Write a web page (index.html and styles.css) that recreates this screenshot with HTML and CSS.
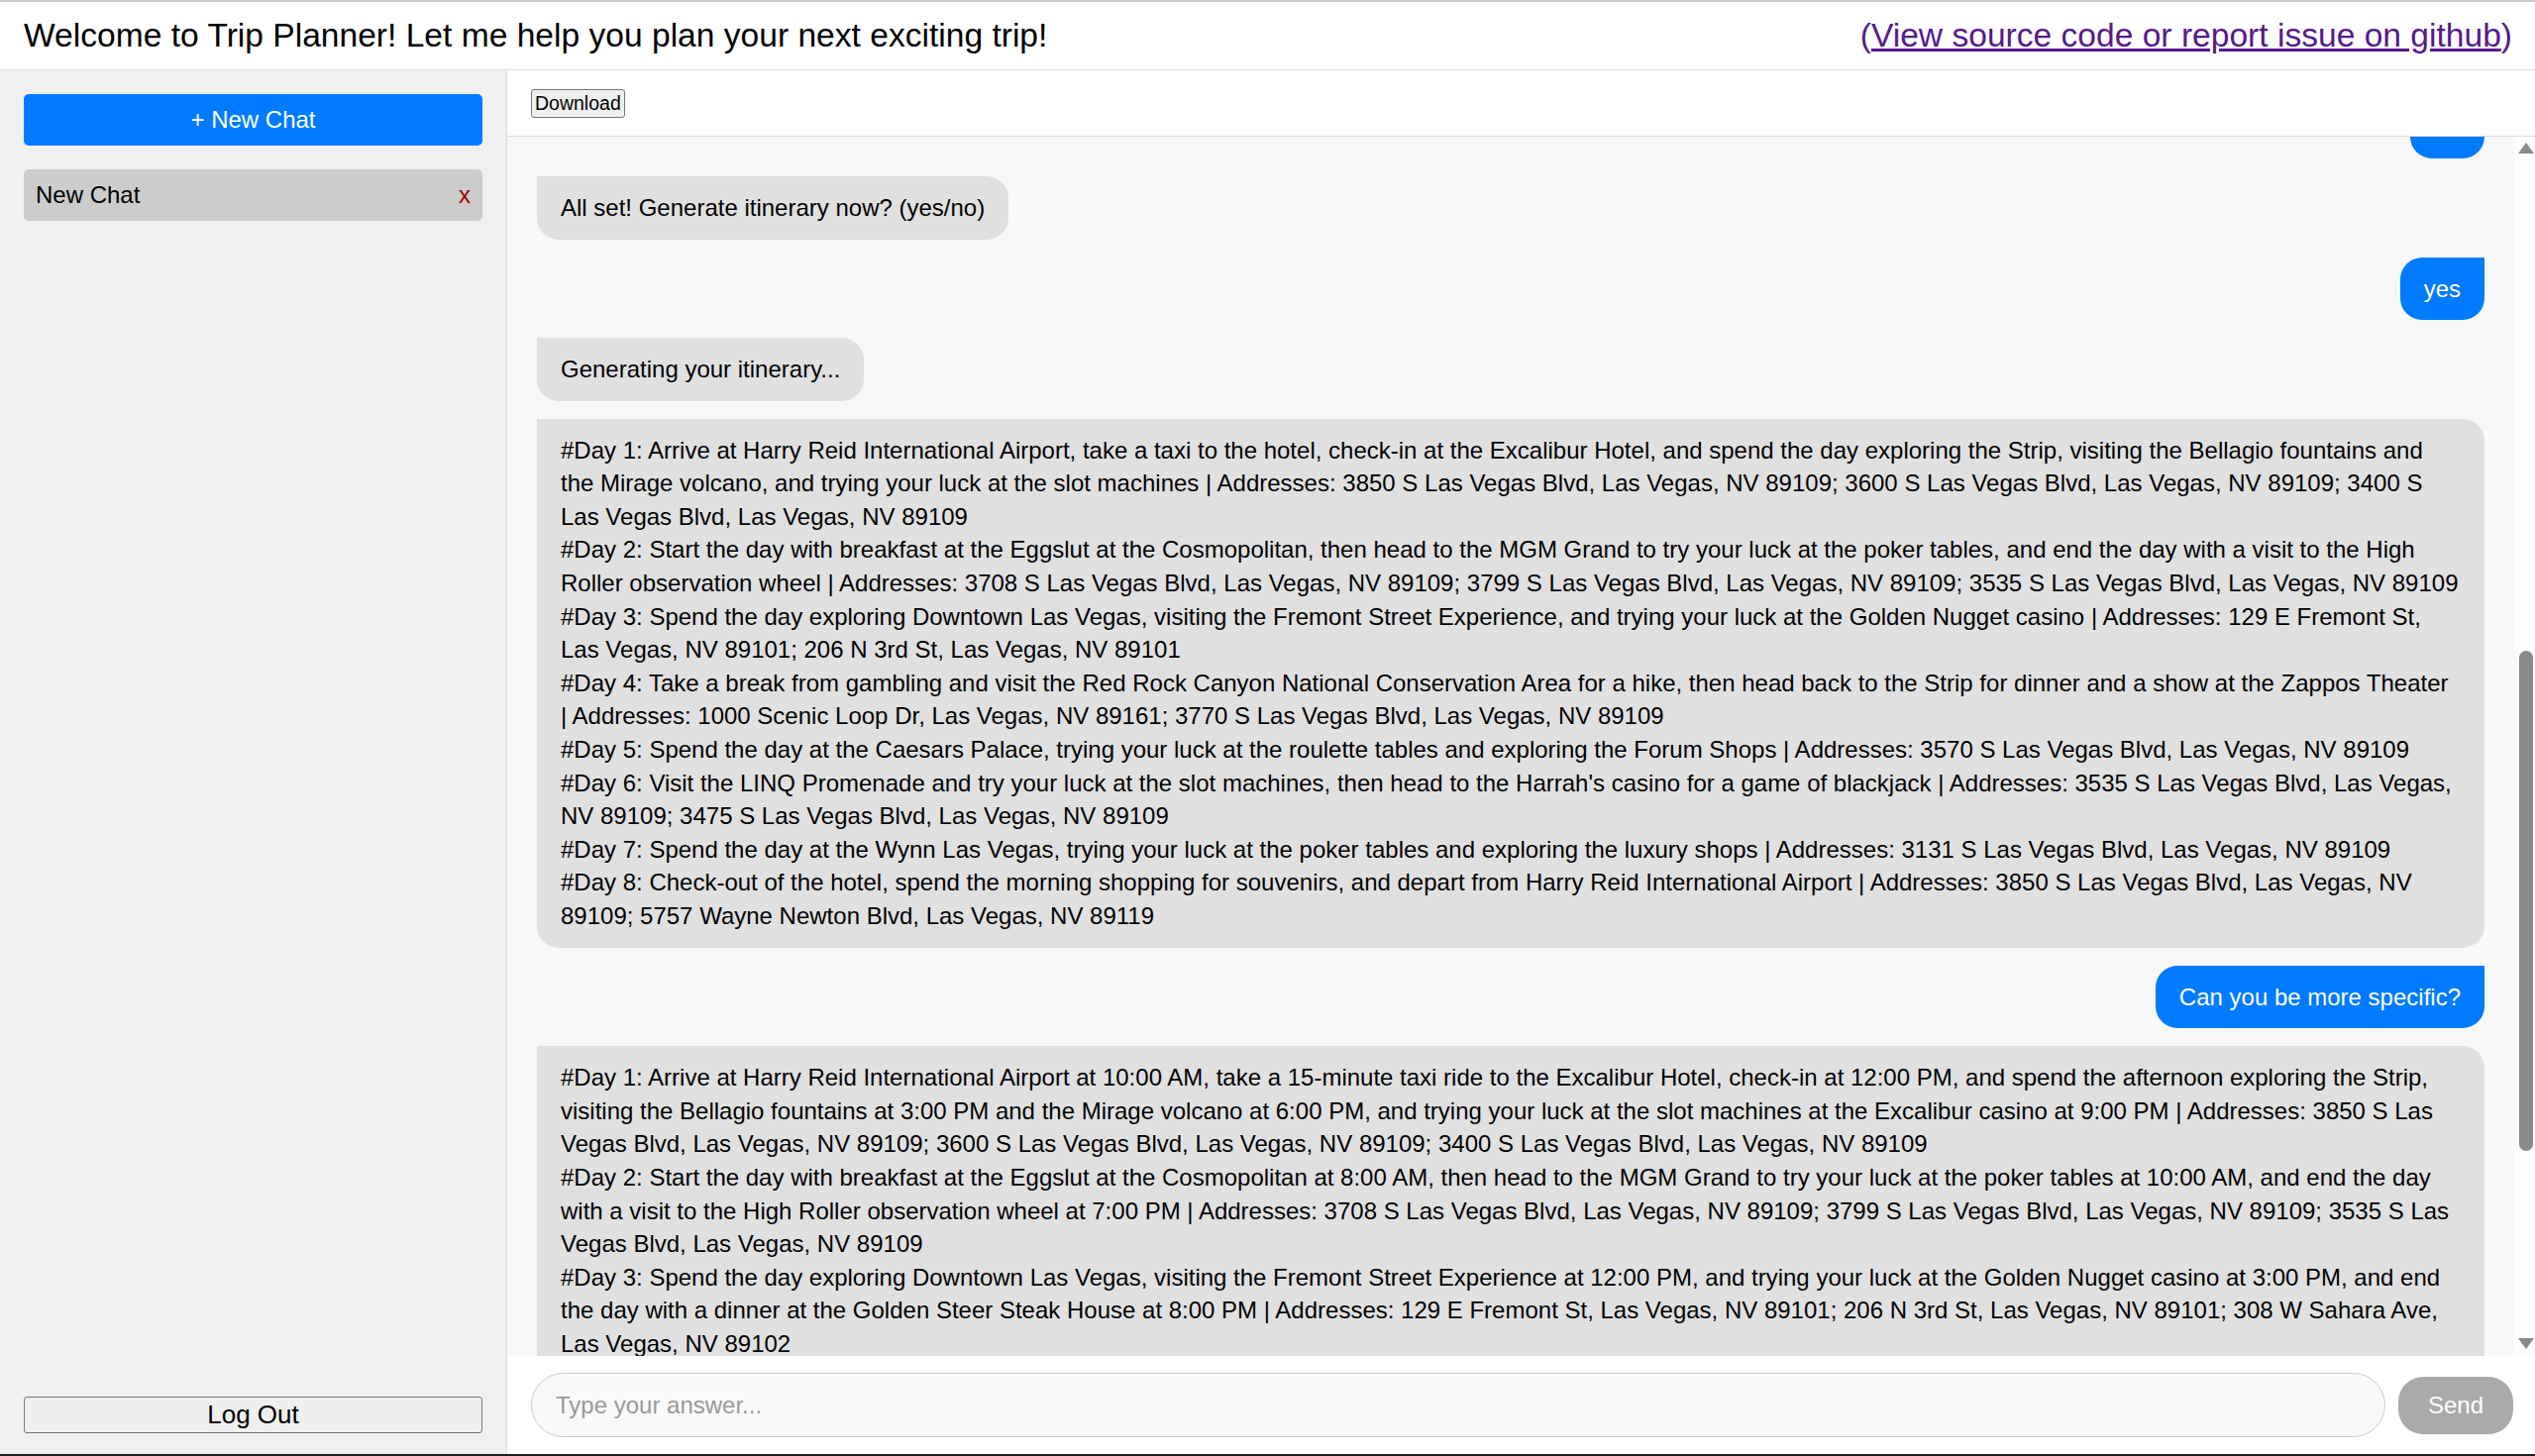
FILE: index.html
```html
<!DOCTYPE html>
<html lang="en">
<head>
<meta charset="utf-8">
<title>Trip Planner</title>
<link rel="stylesheet" href="styles.css">
</head>
<body>
<div class="app">
  <header class="topbar">
    <h1 class="title">Welcome to Trip Planner! Let me help you plan your next exciting trip!</h1>
    <span class="source">(<a href="#">View source code or report issue on github</a>)</span>
  </header>
  <div class="layout">
    <aside class="sidebar">
      <button class="new-chat">+ New Chat</button>
      <div class="chat-item"><span>New Chat</span><span class="del">x</span></div>
      <button class="logout">Log Out</button>
    </aside>
    <main class="main">
      <div class="toolbar"><button class="download">Download</button></div>
      <div class="chat-pane">
        <div class="messages" id="messages">
          <div class="msg user">Hello</div>
          <div class="msg bot">Hi! Where would you like to travel to?</div>
          <div class="msg user">Las Vegas</div>
          <div class="msg bot">Great choice! When does your trip start? (YYYY-MM-DD)</div>
          <div class="msg user">2023-06-01</div>
          <div class="msg bot">How many days will you be staying?</div>
          <div class="msg user">8</div>
          <div class="msg bot">What is your budget for the trip?</div>
          <div class="msg user">$3000</div>
          <div class="msg bot">What kind of activities do you enjoy?</div>
          <div class="msg user">gambling, shows and food</div>
          <div class="msg bot">Who are you traveling with?</div>
          <div class="msg user">friends</div>
          <div class="msg bot">Do you need a rental car? (yes/no)</div>
          <div class="msg user">no</div>
          <div class="msg bot" id="anchor">All set! Generate itinerary now? (yes/no)</div>
          <div class="msg user">yes</div>
          <div class="msg bot">Generating your itinerary...</div>
          <div class="msg bot">#Day 1: Arrive at Harry Reid International Airport, take a taxi to the hotel, check-in at the Excalibur Hotel, and spend the day exploring the Strip, visiting the Bellagio fountains and the Mirage volcano, and trying your luck at the slot machines | Addresses: 3850 S Las Vegas Blvd, Las Vegas, NV 89109; 3600 S Las Vegas Blvd, Las Vegas, NV 89109; 3400 S Las Vegas Blvd, Las Vegas, NV 89109<br>#Day 2: Start the day with breakfast at the Eggslut at the Cosmopolitan, then head to the MGM Grand to try your luck at the poker tables, and end the day with a visit to the High Roller observation wheel | Addresses: 3708 S Las Vegas Blvd, Las Vegas, NV 89109; 3799 S Las Vegas Blvd, Las Vegas, NV 89109; 3535 S Las Vegas Blvd, Las Vegas, NV 89109<br>#Day 3: Spend the day exploring Downtown Las Vegas, visiting the Fremont Street Experience, and trying your luck at the Golden Nugget casino | Addresses: 129 E Fremont St, Las Vegas, NV 89101; 206 N 3rd St, Las Vegas, NV 89101<br>#Day 4: Take a break from gambling and visit the Red Rock Canyon National Conservation Area for a hike, then head back to the Strip for dinner and a show at the Zappos Theater | Addresses: 1000 Scenic Loop Dr, Las Vegas, NV 89161; 3770 S Las Vegas Blvd, Las Vegas, NV 89109<br>#Day 5: Spend the day at the Caesars Palace, trying your luck at the roulette tables and exploring the Forum Shops | Addresses: 3570 S Las Vegas Blvd, Las Vegas, NV 89109<br>#Day 6: Visit the LINQ Promenade and try your luck at the slot machines, then head to the Harrah's casino for a game of blackjack | Addresses: 3535 S Las Vegas Blvd, Las Vegas, NV 89109; 3475 S Las Vegas Blvd, Las Vegas, NV 89109<br>#Day 7: Spend the day at the Wynn Las Vegas, trying your luck at the poker tables and exploring the luxury shops | Addresses: 3131 S Las Vegas Blvd, Las Vegas, NV 89109<br>#Day 8: Check-out of the hotel, spend the morning shopping for souvenirs, and depart from Harry Reid International Airport | Addresses: 3850 S Las Vegas Blvd, Las Vegas, NV 89109; 5757 Wayne Newton Blvd, Las Vegas, NV 89119</div>
          <div class="msg user">Can you be more specific?</div>
          <div class="msg bot">#Day 1: Arrive at Harry Reid International Airport at 10:00 AM, take a 15-minute taxi ride to the Excalibur Hotel, check-in at 12:00 PM, and spend the afternoon exploring the Strip, visiting the Bellagio fountains at 3:00 PM and the Mirage volcano at 6:00 PM, and trying your luck at the slot machines at the Excalibur casino at 9:00 PM | Addresses: 3850 S Las Vegas Blvd, Las Vegas, NV 89109; 3600 S Las Vegas Blvd, Las Vegas, NV 89109; 3400 S Las Vegas Blvd, Las Vegas, NV 89109<br>#Day 2: Start the day with breakfast at the Eggslut at the Cosmopolitan at 8:00 AM, then head to the MGM Grand to try your luck at the poker tables at 10:00 AM, and end the day with a visit to the High Roller observation wheel at 7:00 PM | Addresses: 3708 S Las Vegas Blvd, Las Vegas, NV 89109; 3799 S Las Vegas Blvd, Las Vegas, NV 89109; 3535 S Las Vegas Blvd, Las Vegas, NV 89109<br>#Day 3: Spend the day exploring Downtown Las Vegas, visiting the Fremont Street Experience at 12:00 PM, and trying your luck at the Golden Nugget casino at 3:00 PM, and end the day with a dinner at the Golden Steer Steak House at 8:00 PM | Addresses: 129 E Fremont St, Las Vegas, NV 89101; 206 N 3rd St, Las Vegas, NV 89101; 308 W Sahara Ave, Las Vegas, NV 89102<br>#Day 4: Leave at 8:00 AM for the Red Rock Canyon National Conservation Area for a morning hike, return to the Strip at 1:00 PM for lunch, and end the day with dinner at 6:00 PM and a show at the Zappos Theater at 8:00 PM | Addresses: 1000 Scenic Loop Dr, Las Vegas, NV 89161; 3770 S Las Vegas Blvd, Las Vegas, NV 89109<br>#Day 5: Spend the day at the Caesars Palace, trying your luck at the roulette tables at 11:00 AM, exploring the Forum Shops at 3:00 PM, and ending the night with dinner at Hell's Kitchen at 7:00 PM and a walk along the Strip to see the lights at 10:00 PM | Addresses: 3570 S Las Vegas Blvd, Las Vegas, NV 89109<br>#Day 6: Visit the LINQ Promenade at 11:00 AM and try your luck at the slot machines, then head to the Harrah's casino at 7:00 PM for a game of blackjack | Addresses: 3535 S Las Vegas Blvd, Las Vegas, NV 89109; 3475 S Las Vegas Blvd, Las Vegas, NV 89109<br>#Day 7: Spend the day at the Wynn Las Vegas, trying your luck at the poker tables at 2:00 PM, exploring the luxury shops at 5:00 PM, and watching the Lake of Dreams show at 9:00 PM before a late dessert at the Wynn buffet | Addresses: 3131 S Las Vegas Blvd, Las Vegas, NV 89109<br>#Day 8: Check-out of the hotel at 10:00 AM, spend the morning shopping for souvenirs, and depart from Harry Reid International Airport at 4:00 PM | Addresses: 3850 S Las Vegas Blvd, Las Vegas, NV 89109; 5757 Wayne Newton Blvd, Las Vegas, NV 89119<br>Estimated total budget: $2,950<br>Have a great trip!</div>
        </div>
        <div class="scrollbar" aria-hidden="true">
          <div class="sb-btn"><span class="arrow-up"></span></div>
          <div class="sb-track" id="track"><div class="sb-thumb" id="thumb"></div></div>
          <div class="sb-btn"><span class="arrow-down"></span></div>
        </div>
      </div>
      <form class="composer" onsubmit="return false">
        <input class="answer" type="text" placeholder="Type your answer...">
        <button class="send" type="submit" disabled>Send</button>
      </form>
    </main>
  </div>
</div>
<script src="script.js"></script>
</body>
</html>
```
FILE: styles.css
```css
html, body {
  margin: 0;
  padding: 0;
  height: 100%;
  background: #fff;
}
body {
  font-family: "Liberation Sans", Arial, sans-serif;
  color: #000;
}
button, input {
  font-family: "Liberation Sans", Arial, sans-serif;
}
.app {
  height: 1470px;
  box-sizing: border-box;
  border-top: 2px solid #cccccc;
  border-bottom: 2px solid #222222;
  display: flex;
  flex-direction: column;
  overflow: hidden;
}
.topbar {
  height: 69px;
  flex: none;
  box-sizing: border-box;
  border-bottom: 1px solid #dddddd;
  display: flex;
  align-items: center;
  justify-content: space-between;
  padding: 0 23px 0 24px;
  background: #fff;
}
.title {
  margin: 0;
  font-size: 33.6px;
  font-weight: normal;
  line-height: 1.15;
  white-space: nowrap;
}
.source {
  font-size: 33.6px;
  color: #551a8b;
  line-height: 1.15;
  white-space: nowrap;
}
.source a {
  color: #551a8b;
  text-decoration: underline;
}
.layout {
  flex: 1;
  display: flex;
  min-height: 0;
}
.sidebar {
  width: 512px;
  flex: none;
  box-sizing: border-box;
  background: #f0f0f0;
  border-right: 1px solid #dddddd;
  padding: 24px 24px 21px;
  display: flex;
  flex-direction: column;
  gap: 24px;
}
.new-chat {
  height: 52px;
  border: none;
  border-radius: 5px;
  background: #007bff;
  color: #fff;
  font-size: 24px;
  padding: 0;
}
.chat-item {
  height: 52px;
  box-sizing: border-box;
  border-radius: 5px;
  background: #cccccc;
  display: flex;
  align-items: center;
  justify-content: space-between;
  padding: 0 12px;
  font-size: 24px;
}
.del {
  color: #a00000;
}
.logout {
  margin-top: auto;
  height: 37px;
  font-size: 26px;
  background: #efefef;
  border: 1px solid #767676;
  border-radius: 3px;
  color: #000;
  padding: 0;
}
.main {
  flex: 1;
  min-width: 0;
  display: flex;
  flex-direction: column;
}
.toolbar {
  height: 67px;
  flex: none;
  box-sizing: border-box;
  border-bottom: 1px solid #dddddd;
  display: flex;
  align-items: center;
  padding: 0 24px;
  background: #fff;
}
.download {
  height: 29px;
  font-size: 19.5px;
  padding: 0 3px;
  border: 1px solid #767676;
  border-radius: 3px;
  background: #efefef;
  color: #000;
}
.chat-pane {
  flex: 1;
  min-height: 0;
  display: flex;
  background: #f8f8f8;
}
.messages {
  flex: 1;
  min-width: 0;
  position: relative;
  overflow-y: auto;
  scrollbar-width: none;
  padding: 30px;
  display: flex;
  flex-direction: column;
  gap: 18px;
}
.messages::-webkit-scrollbar {
  display: none;
}
.scrollbar {
  width: 21px;
  flex: none;
  background: #fcfcfc;
  display: flex;
  flex-direction: column;
}
.sb-btn {
  height: 21px;
  flex: none;
  display: flex;
  justify-content: center;
  align-items: center;
  padding-left: 2px;
}
.arrow-up {
  width: 0;
  height: 0;
  border-left: 8px solid transparent;
  border-right: 8px solid transparent;
  border-bottom: 11px solid #8a8a8a;
  margin-top: 1px;
}
.arrow-down {
  width: 0;
  height: 0;
  border-left: 8px solid transparent;
  border-right: 8px solid transparent;
  border-top: 11px solid #8a8a8a;
  margin-bottom: 4px;
}
.sb-track {
  flex: 1;
  min-height: 0;
}
.sb-thumb {
  width: 14px;
  margin-left: 5px;
  background: #8a8a8a;
  border-radius: 7px;
}
.msg {
  flex: none;
  padding: 15px 24px;
  font-size: 24px;
  line-height: 1.4;
  border-radius: 22px;
}
.bot {
  align-self: flex-start;
  background: #e0e0e0;
  color: #000;
  border-top-left-radius: 0;
}
.user {
  align-self: flex-end;
  background: #007bff;
  color: #fff;
  border-top-right-radius: 0;
}
.composer {
  height: 99px;
  flex: none;
  box-sizing: border-box;
  margin: 0;
  display: flex;
  align-items: center;
  gap: 13px;
  padding: 0 22px 0 24px;
  background: #fff;
}
.answer {
  flex: 1;
  min-width: 0;
  height: 65px;
  box-sizing: border-box;
  border: 1px solid #cccccc;
  border-radius: 33px;
  background: #f9f9f9;
  padding: 0 24px;
  font-size: 24px;
  color: #000;
  outline: none;
}
.answer::placeholder {
  color: #999999;
}
.send {
  height: 58px;
  padding: 0 30px;
  border: none;
  border-radius: 25px;
  background: #aaaaaa;
  color: #fff;
  font-size: 24px;
}
```
FILE: script.js
```js
(function () {
  var box = document.getElementById('messages');
  var anchor = document.getElementById('anchor');
  var track = document.getElementById('track');
  var thumb = document.getElementById('thumb');
  box.scrollTop = anchor.offsetTop - 40;
  function sync() {
    var t = track.clientHeight;
    var h = Math.max(20, t * box.clientHeight / box.scrollHeight);
    thumb.style.height = h + 'px';
    thumb.style.marginTop = ((t - h) * box.scrollTop / (box.scrollHeight - box.clientHeight)) + 'px';
  }
  sync();
  box.addEventListener('scroll', sync);
})();
```
